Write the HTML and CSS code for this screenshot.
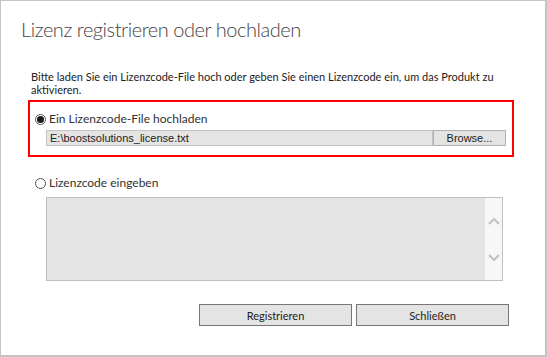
FILE: index.html
```html
<!DOCTYPE html>
<html>

<head>
  <meta name="viewport" content="width=device-width, initial-scale=1.0">
  <title>Lizenz registrieren oder hochladen</title>
  <link rel="stylesheet" href="styles.css">
</head>

<body>
  <div class="dialog">
    <h1 class="title">Lizenz registrieren oder hochladen</h1>
    <p class="intro">Bitte laden Sie ein Lizenzcode-File hoch oder geben Sie einen Lizenzcode ein, um das Produkt zu aktivieren.</p>

    <div class="option selected">
      <label class="radio">
        <span class="dot checked"></span>
        <span>Ein Lizenzcode-File hochladen</span>
      </label>
      <div class="file-row">
        <div class="file-path">E:\boostsolutions_license.txt</div>
        <div class="browse">Browse...</div>
      </div>
    </div>

    <div class="option">
      <label class="radio">
        <span class="dot"></span>
        <span>Lizenzcode eingeben</span>
      </label>
      <div class="code-box">
        <div class="code-text"></div>
        <div class="scroll">
          <svg width="12" height="8" viewBox="0 0 12 8"><path d="M1 7 L6 2 L11 7" fill="none" stroke="#c2c2c2" stroke-width="2"/></svg>
          <svg width="12" height="8" viewBox="0 0 12 8"><path d="M1 1 L6 6 L11 1" fill="none" stroke="#c2c2c2" stroke-width="2"/></svg>
        </div>
      </div>
    </div>

    <div class="actions">
      <button class="btn" type="button">Registrieren</button>
      <button class="btn" type="button">Schließen</button>
    </div>
  </div>
</body>

</html>
```

FILE: styles.css
```css
html,
body {
  margin: 0;
  padding: 0;
  background-color: #ffffff;
}

.dialog {
  width: 547px;
  height: 357px;
  box-sizing: border-box;
  border: 1px solid #c4c4c4;
  border-right-width: 2px;
  border-bottom-width: 2px;
  display: flex;
  flex-direction: column;
  font-family: Lato, "Open Sans", sans-serif;
  color: #222;
}

.title {
  margin: 14px 0 0 20px;
  font-family: Lato, sans-serif;
  font-weight: 300;
  font-size: 20px;
  line-height: 28px;
  letter-spacing: -0.45px;
  color: #444;
}

.intro {
  margin: 27px 0 0 30px;
  width: 485px;
  font-size: 11px;
  line-height: 13px;
}

.option {
  margin: 4px 0 0 27px;
  width: 486px;
  box-sizing: border-box;
  padding: 10px 6px 8px 5px;
  border: 2px solid transparent;
}

.option.selected {
  border-color: #ff0000;
  height: 57px;
}

.option + .option {
  margin-top: 7px;
}

.radio {
  display: flex;
  align-items: center;
  gap: 3px;
  font-size: 12px;
  line-height: 14px;
  color: #333;
}

.dot {
  width: 11px;
  height: 11px;
  border: 1px solid #555;
  border-radius: 50%;
  box-sizing: border-box;
  display: flex;
  align-items: center;
  justify-content: center;
}

.dot.checked::after {
  content: "";
  width: 7px;
  height: 7px;
  border-radius: 50%;
  background-color: #1a1a1a;
}

.file-row {
  display: flex;
  margin: 4px 0 0 11px;
  height: 16px;
}

.file-path {
  flex: 1;
  background-color: #e4e4e4;
  border: 1px solid #c4c4c4;
  font-family: "Liberation Sans", Arial, sans-serif;
  font-size: 11px;
  line-height: 14px;
  padding-left: 3px;
}

.browse {
  width: 71px;
  background-color: #e4e4e4;
  border: 1px solid #b0b0b0;
  font-family: "Liberation Sans", Arial, sans-serif;
  font-size: 11px;
  line-height: 14px;
  text-align: center;
}

.code-box {
  display: flex;
  margin: 7px 0 0 11px;
  width: 457px;
  height: 84px;
  box-sizing: border-box;
  border: 1px solid #c0c0c0;
}

.code-text {
  flex: 1;
  background-color: #e4e4e4;
}

.scroll {
  width: 17px;
  background-color: #f7f7f7;
  display: flex;
  flex-direction: column;
  align-items: center;
  justify-content: space-between;
  padding: 19px 0 18px;
}

.actions {
  display: flex;
  gap: 4px;
  margin: 13px 0 0 198px;
}

.btn {
  width: 153px;
  height: 22px;
  background-color: #e4e4e4;
  border: 1px solid #777;
  font-family: Lato, sans-serif;
  font-size: 11px;
  color: #222;
  padding: 0;
}
```
